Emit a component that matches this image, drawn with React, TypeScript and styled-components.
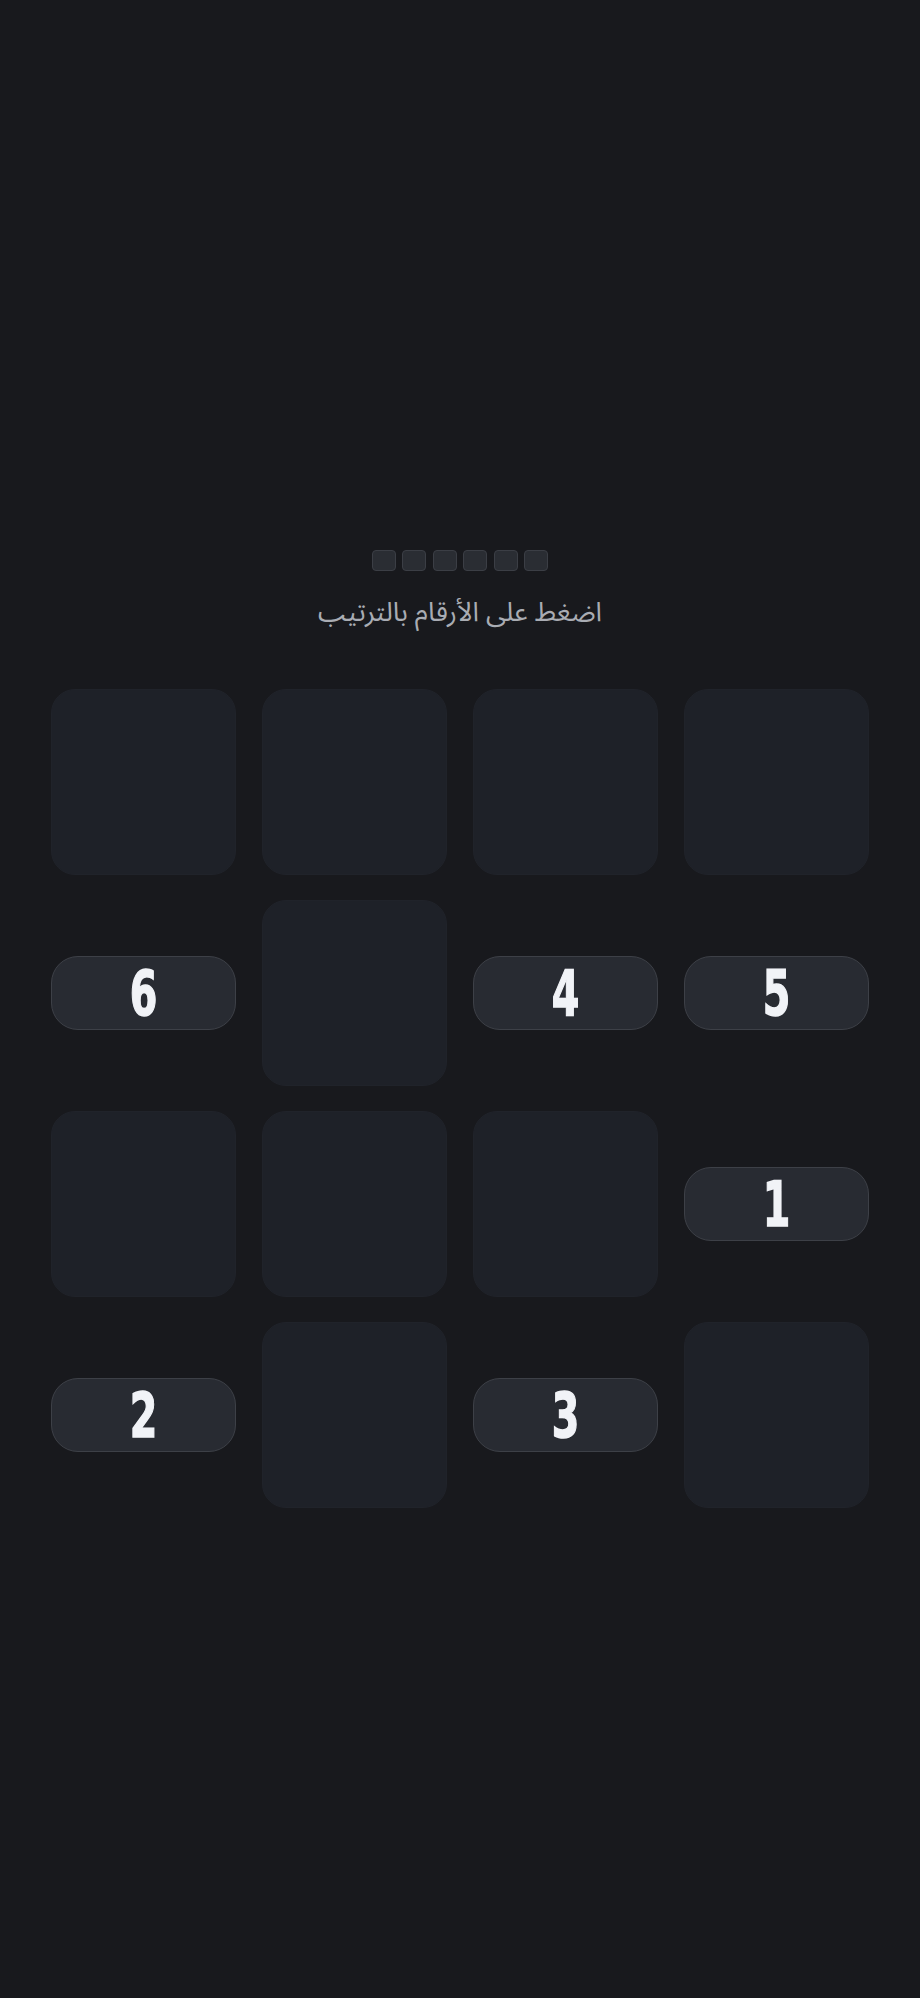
import React from "react";
import styled, { createGlobalStyle } from "styled-components";

const Global = createGlobalStyle`
  html, body {
    margin: 0;
    padding: 0;
    background: #18191d;
  }
  * { box-sizing: border-box; }
`;

const Page = styled.main`
  min-height: 1998px;
  background: #18191d;
  display: flex;
  flex-direction: column;
  align-items: center;
  padding-top: 550px;
  font-family: "Noto Sans Arabic", "Noto Sans", "DejaVu Sans", sans-serif;
`;

const Progress = styled.div`
  display: flex;
  gap: 6.5px;
  direction: ltr;
`;

const Dot = styled.span<{ $done?: boolean }>`
  width: 24px;
  height: 21px;
  border-radius: 4px;
  background: ${(p) => (p.$done ? "#5b8cff" : "#2a2d33")};
  border: 1px solid #3b3e45;
`;

const Label = styled.p`
  margin: 22px 0 0;
  direction: rtl;
  color: #a9acb3;
  font-size: 27px;
  line-height: 40px;
  font-weight: 400;
`;

const Board = styled.div`
  margin-top: 56px;
  direction: ltr;
  display: grid;
  grid-template-columns: repeat(4, 185px);
  grid-auto-rows: 186px;
  column-gap: 26px;
  row-gap: 25px;
`;

const Cell = styled.div`
  display: flex;
  align-items: center;
  justify-content: stretch;
`;

const Tile = styled.div`
  width: 100%;
  height: 100%;
  border-radius: 24px;
  background: #1e2128;
  border: 1px solid #20232a;
`;

const NumberButton = styled.button`
  width: 100%;
  height: 74px;
  border-radius: 27px;
  background: #282b32;
  border: 1.5px solid #3d4047;
  display: flex;
  align-items: center;
  justify-content: center;
  padding: 0;
  cursor: pointer;
`;

const Digit = styled.span`
  display: inline-block;
  color: #f1f3f7;
  font-family: "DejaVu Sans", sans-serif;
  font-weight: 700;
  font-size: 62px;
  line-height: 1;
  -webkit-text-stroke: 1.5px #f1f3f7;
  transform: scaleX(0.64);
  margin-top: 2px;
`;

const layout: (number | null)[] = [
  null, null, null, null,
  6, null, 4, 5,
  null, null, null, 1,
  2, null, 3, null,
];

export default function App() {
  return (
    <>
      <Global />
      <Page>
        <Progress>
          {Array.from({ length: 6 }).map((_, i) => (
            <Dot key={i} />
          ))}
        </Progress>
        <Label>اضغط على الأرقام بالترتيب</Label>
        <Board>
          {layout.map((n, i) => (
            <Cell key={i}>
              {n === null ? (
                <Tile />
              ) : (
                <NumberButton>
                  <Digit>{n}</Digit>
                </NumberButton>
              )}
            </Cell>
          ))}
        </Board>
      </Page>
    </>
  );
}
